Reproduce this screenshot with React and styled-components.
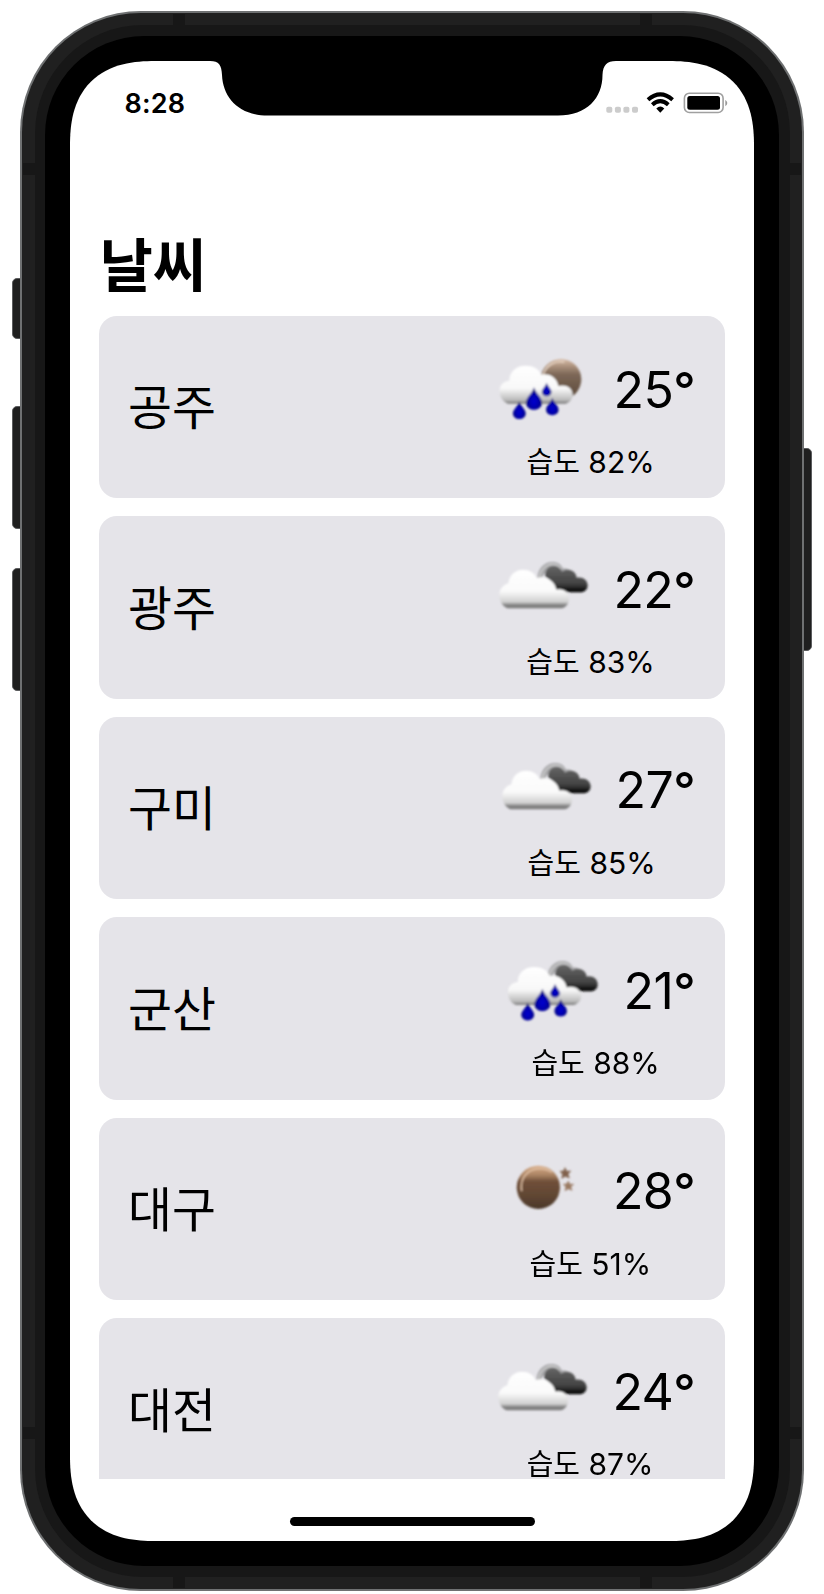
import React from 'react';
import styled, { createGlobalStyle } from 'styled-components';

const Global = createGlobalStyle`
  * { box-sizing: border-box; }
  body { margin: 0; background: #fff; color: #000; }
`;

const Stage = styled.main`
  position: relative;
  width: 824px;
  height: 1594px;
  padding: 11px 20px 3px;
  overflow: hidden;
`;

const SideButton = styled.span`
  position: absolute;
  top: ${(p) => p.$top}px;
  ${(p) => p.$side}: 12px;
  width: 16px;
  height: ${(p) => p.$height}px;
  background: #1f1f1f;
  border: 1px solid #5b5c5e;
  border-radius: 5px;
`;

const Shell = styled.div`
  position: relative;
  width: 784px;
  height: 1580px;
  padding: 2px;
  border-radius: 121px;
  background: #6f7172;
`;

const Rail = styled.div`
  position: relative;
  height: 100%;
  padding: 12px 12.5px;
  border-radius: 119px;
  background: #202020;
`;

const Inner = styled.div`
  position: relative;
  height: 100%;
  padding: 11px 10.5px;
  border-radius: 108px;
  background: #171717;
`;

const Bezel = styled.div`
  height: 100%;
  padding: 25px;
  border-radius: 99px;
  background: #000;
`;

const Antenna = styled.i`
  position: absolute;
  width: 12px;
  height: 12px;
  background: #171717;
  ${(p) => p.$v}: ${(p) => p.$vy}px;
  ${(p) => p.$h}: ${(p) => p.$hx}px;
`;

const Screen = styled.div`
  position: relative;
  display: flex;
  flex-direction: column;
  height: 100%;
  border-radius: 72px;
  background: #fff;
  overflow: hidden;

  @supports (corner-shape: squircle) {
    border-radius: 85px;
    corner-shape: superellipse(1.3);
  }
`;

const NotchShape = styled.svg`
  position: absolute;
  top: 0;
  left: 140px;
  width: 406px;
  height: 55px;
`;

const StatusBar = styled.header`
  display: flex;
  justify-content: space-between;
  height: 82px;
  padding: 24px 26px 0 54.5px;
`;

const Clock = styled.time`
  padding-top: 1.500px;
  font: 600 27px/34px Inter, sans-serif;
  letter-spacing: 0.2px;
`;

const StatusIcons = styled.svg`
  width: 124px;
  height: 34px;
`;

const Title = styled.h1`
  margin: 77px 0 0;
  padding-left: 29.5px;
  height: 96px;
  font: 700 58px/84px 'Noto Sans CJK KR', sans-serif;
`;

const List = styled.ul`
  list-style: none;
  margin: 0;
  padding: 0 29.3px;
  height: 1163px;
  overflow: hidden;
  display: flex;
  flex-direction: column;
  gap: 18.3px;
`;

const Card = styled.li`
  flex: none;
  display: flex;
  justify-content: space-between;
  align-items: center;
  height: 182.2px;
  padding: 0 29.6px 0 28.8px;
  border-radius: 18px;
  background: #e5e4e9;
`;

const City = styled.span`
  padding-bottom: 3.5px;
  font: 400 47.8px/70px 'Noto Sans CJK KR', sans-serif;
`;

const Report = styled.div`
  display: flex;
  flex-direction: column;
  align-items: center;
  height: 100%;
  padding-top: 31.5px;
`;

const Conditions = styled.div`
  display: flex;
  align-items: flex-start;
  height: 87px;
`;

const Glyph = styled.svg`
  width: 95px;
  height: 66.7px;
  margin: 8.5px 22px 0 11px;
`;

const Temperature = styled.span`
  font: 400 50px/84px Inter, sans-serif;
  letter-spacing: -0.6px;
`;

const Degree = styled.span`
  font-size: 49px;
  font-weight: 500;
  letter-spacing: -0.5px;
`;

const Humidity = styled.span`
  margin-top: 11.5px;
  padding-left: 0.6px;
  font: 400 30px/28px Inter, 'Noto Sans CJK KR', sans-serif;
  white-space: pre;
`;

const HumidityLabel = styled.span`
  font: 400 29px/28px 'Noto Sans CJK KR', sans-serif;
`;

const HomeBar = styled.div`
  width: 245px;
  height: 9px;
  margin: 38px auto 0;
  border-radius: 5px;
  background: #000;
`;

const Defs = styled.svg`
  position: absolute;
  width: 0;
  height: 0;
`;

function Gradients() {
  return (
    <Defs aria-hidden="true">
      <defs>
        <linearGradient id="white" x1="0" y1="0" x2="0" y2="1">
          <stop offset="0" stopColor="#fff" />
          <stop offset=".55" stopColor="#fafafa" />
          <stop offset=".84" stopColor="#cfcfcf" />
          <stop offset=".9" stopColor="#8a8a8a" />
          <stop offset="1" stopColor="#787878" />
        </linearGradient>
        <linearGradient id="rainWhite" x1="0" y1="0" x2="0" y2="1">
          <stop offset="0" stopColor="#fff" />
          <stop offset=".6" stopColor="#f8f8f8" />
          <stop offset=".9" stopColor="#bcbcbc" />
          <stop offset="1" stopColor="#777" />
        </linearGradient>
        <linearGradient id="dark" x1="0" y1="0" x2="0" y2="1">
          <stop offset="0" stopColor="#666" />
          <stop offset=".3" stopColor="#555" />
          <stop offset=".65" stopColor="#444" />
          <stop offset="1" stopColor="#050505" />
        </linearGradient>
        <linearGradient id="moon" x1="0" y1="0" x2="0" y2="1">
          <stop offset="0" stopColor="#d9ad88" />
          <stop offset=".22" stopColor="#a98263" />
          <stop offset=".36" stopColor="#71503a" />
          <stop offset=".7" stopColor="#604633" />
          <stop offset="1" stopColor="#493729" />
        </linearGradient>
        <linearGradient id="paleMoon" x1="0" y1="0" x2="0" y2="1">
          <stop offset="0" stopColor="#d8bda8" />
          <stop offset=".2" stopColor="#a68c78" />
          <stop offset=".38" stopColor="#7d6858" />
          <stop offset="1" stopColor="#594737" />
        </linearGradient>
        <radialGradient id="drop" cx=".5" cy=".62" r=".55">
          <stop offset="0" stopColor="#0000d0" />
          <stop offset=".5" stopColor="#0000b0" />
          <stop offset="1" stopColor="#080870" />
        </radialGradient>
        <filter id="soft" x="-10%" y="-10%" width="120%" height="120%">
          <feGaussianBlur stdDeviation="2.6" />
        </filter>
      </defs>
    </Defs>
  );
}

const Drop = ({ x, y, s = 1 }) => (
  <path
    d="M0-33C5-15 24-2 24 13C24 26 13 34 0 34S-24 26-24 13C-24-2-5-15 0-33Z"
    transform={`translate(${x} ${y}) scale(${s})`}
    fill="url(#drop)"
  />
);

const DarkCloud = () => (
  <g>
    <path d="M174 116C176 86 196 68 219 68C235 68 246 76 251 88C258 86 276 90 288 108L246 104L200 100C192 104 188 112 187 120Z" fill="#a6a6a8" />
    <path d="M181 114C183 92 199 76 219 74C232 74 240 80 244 88" fill="none" stroke="#e6e6e6" strokeWidth="3" />
    <path d="M198 112C196 94 206 80 222 80C236 80 245 87 248 97C264 85 290 92 292 115C309 111 325 121 325 138C325 151 316 159 302 159H248C229 159 227 139 215 127C210 120 204 114 198 112Z" fill="url(#dark)" />
  </g>
);

const RainFront = () => (
  <g>
    <path d="M82 193C66 186 58 172 58 153C58 137 70 125 87 124C87 98 106 79 136 79C159 79 175 88 183 106C207 101 231 116 234 140C255 134 276 145 277 164C278 178 270 188 256 193Z" fill="url(#rainWhite)" />
    <Drop x={117} y={212} s={0.8} />
    <Drop x={161} y={177} />
    <Drop x={216} y={201} s={0.78} />
    <Drop x={199} y={150} s={0.6} />
  </g>
);

function WeatherIcon({ kind }) {
  return (
    <Glyph viewBox="50 50 285 200" aria-hidden="true">
      <g filter="url(#soft)">
        {kind === 'moonRain' && (
          <>
            <circle cx="242" cy="120" r="61" fill="url(#paleMoon)" />
            <path d="M188 106C198 78 224 62 252 68" fill="none" stroke="#ead8c8" strokeWidth="4" />
            <RainFront />
          </>
        )}
        {kind === 'rain' && (
          <g transform="translate(-5 1)">
            <g transform="translate(2 -7)"><DarkCloud /></g>
            <RainFront />
          </g>
        )}
        {kind === 'cloud' && (
          <>
            <DarkCloud />
            <path d="M84 207C68 201 60 183 60 165C61 149 72 136 87 132C90 107 107 91 131 91C151 91 165 100 172 116C198 108 227 124 231 151C251 145 270 158 269 178C269 193 260 204 246 207Z" fill="url(#white)" />
          </>
        )}
        {kind === 'moon' && (
          <g transform="translate(23 1)">
            <circle cx="154" cy="137" r="65" fill="url(#moon)" />
            <path d="M104 148C98 112 119 84 153 81C172 80 186 85 194 92" fill="none" stroke="#e6c6aa" strokeWidth="4" />
            <path d="M234 78l5 11 12-1-8 9 4 12-12-5-11 6 3-12-8-9 11-1z" fill="#80614b" stroke="#80614b" strokeWidth="2" />
            <path d="M244 118l4 10 12 0-9 7 4 11-11-5-10 6 3-12-8-7 10-1z" fill="#9a7961" stroke="#9a7961" strokeWidth="2" />
          </g>
        )}
      </g>
    </Glyph>
  );
}

const cities = [
  { name: '공주', kind: 'moonRain', temp: 25, humidity: 82 },
  { name: '광주', kind: 'cloud', temp: 22, humidity: 83 },
  { name: '구미', kind: 'cloud', temp: 27, humidity: 85 },
  { name: '군산', kind: 'rain', temp: 21, humidity: 88 },
  { name: '대구', kind: 'moon', temp: 28, humidity: 51 },
  { name: '대전', kind: 'cloud', temp: 24, humidity: 87 },
];

export default function App() {
  return (
    <Stage>
      <Global />
      <Gradients />
      <SideButton $side="left" $top={277.5} $height={61.5} />
      <SideButton $side="left" $top={405.5} $height={123} />
      <SideButton $side="left" $top={567.5} $height={123} />
      <SideButton $side="right" $top={447.5} $height={203} />
      <Shell>
        <Rail>
          {['left', 'right'].map((h) =>
            ['top', 'bottom'].map((v) => (
              <React.Fragment key={h + v}>
                <Antenna $v={v} $vy={1} $h={h} $hx={150.5} />
                <Antenna $v={v} $vy={150} $h={h} $hx={1} />
              </React.Fragment>
            ))
          )}
          <Inner>
            <Bezel>
              <Screen>
                <NotchShape viewBox="0 0 406 55">
                  <path d="M0 0H406C397 0 393 4 392.500 14C392.500 37 377 54.500 348 54.500H58C29 54.500 13 37 12 14C11.500 4 9 0 0 0Z" fill="#000" />
                </NotchShape>
                <StatusBar>
                  <Clock>8:28</Clock>
                  <StatusIcons viewBox="0 0 124 34">
                    {[2.3, 10.9, 19.4, 28].map((x) => (
                      <rect key={x} x={x} y="21.700" width="6" height="6" rx="1.800" fill="#ccc" />
                    ))}
                    <g fill="none" stroke="#000" strokeWidth="4">
                      <path d="M44 14.700Q56.300 4 68.600 14.700" />
                      <path d="M48.300 19.700Q56.300 12.700 64.300 19.700" />
                    </g>
                    <path d="M52.300 23.500Q56.300 19.500 60.300 23.500L56.300 27.800Z" />
                    <rect x="80.400" y="8.200" width="38.700" height="19.300" rx="5" fill="none" stroke="#a0a0a0" strokeWidth="1.600" />
                    <rect x="83.300" y="11" width="32.700" height="13.700" rx="2.500" />
                    <path d="M121.300 14.700Q125.300 18 121.300 21.300Z" fill="#999" />
                  </StatusIcons>
                </StatusBar>
                <Title>날씨</Title>
                <List>
                  {cities.map((c) => (
                    <Card key={c.name}>
                      <City>{c.name}</City>
                      <Report>
                        <Conditions>
                          <WeatherIcon kind={c.kind} />
                          <Temperature>
                            {c.temp}
                            <Degree>°</Degree>
                          </Temperature>
                        </Conditions>
                        <Humidity>
                          <HumidityLabel>습도</HumidityLabel> {c.humidity}%
                        </Humidity>
                      </Report>
                    </Card>
                  ))}
                </List>
                <HomeBar />
              </Screen>
            </Bezel>
          </Inner>
        </Rail>
      </Shell>
    </Stage>
  );
}
